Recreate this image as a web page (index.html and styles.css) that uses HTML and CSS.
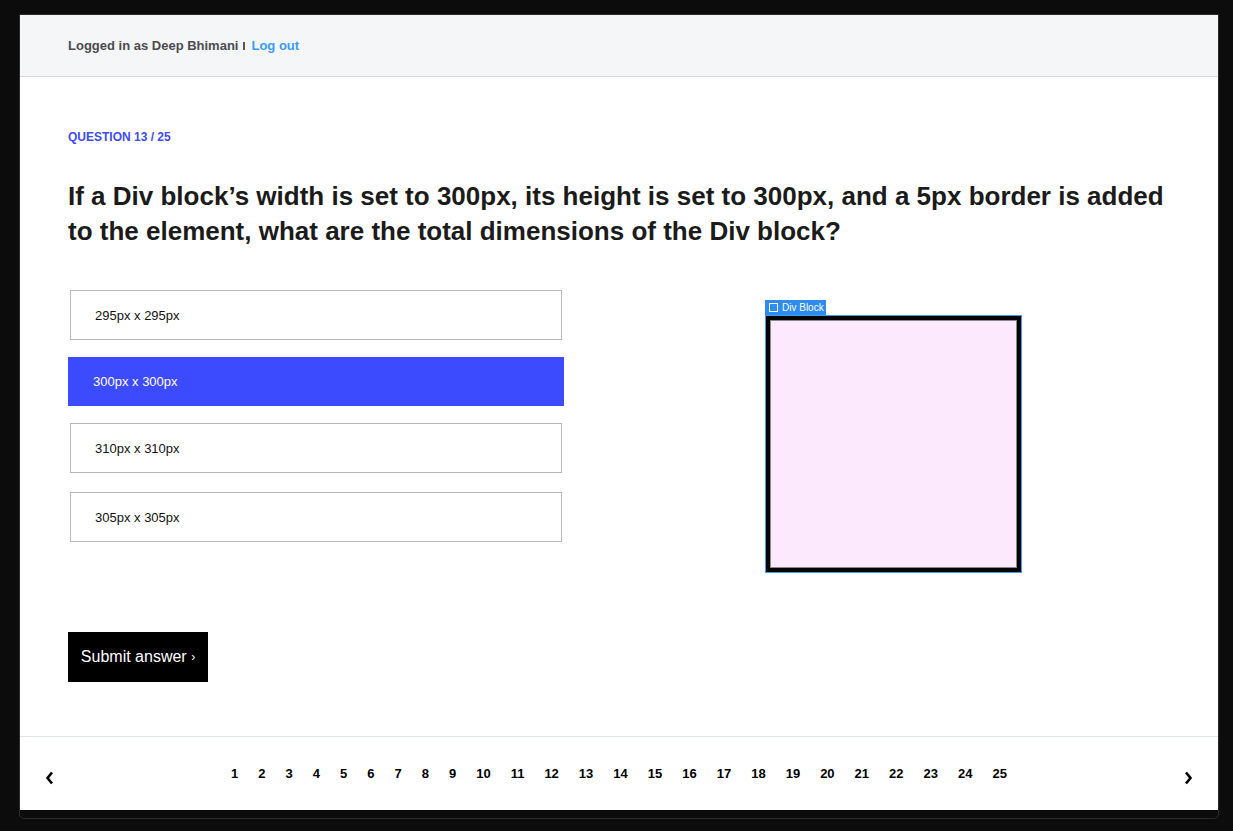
FILE: index.html
```html
<!DOCTYPE html>
<html lang="en">
<head>
<meta charset="utf-8">
<title>Quiz</title>
<link rel="stylesheet" href="styles.css">
</head>
<body>
<div class="frame">
  <div class="app">
    <header class="topbar">
      <span class="who">Logged in as Deep Bhimani</span>
      <span class="sep"></span>
      <a class="logout" href="#">Log out</a>
    </header>
    <main class="main">
      <div class="qlabel">QUESTION 13 / 25</div>
      <h1 class="qtitle">If a Div block’s width is set to 300px, its height is set to 300px, and a 5px border is added to the element, what are the total dimensions of the Div block?</h1>
      <div class="qgrid">
        <div class="options">
          <div class="option">295px x 295px</div>
          <div class="option selected">300px x 300px</div>
          <div class="option">310px x 310px</div>
          <div class="option">305px x 305px</div>
        </div>
        <div class="figure">
          <div class="divblock">
            <div class="tag"><span class="tagbox"></span>Div Block</div>
            <div class="blockouter"><div class="blockinner"></div></div>
          </div>
        </div>
      </div>
      <button class="submit">Submit answer <span class="chev">›</span></button>
    </main>
    <footer class="pager">
      <a class="arrow" href="#"><svg width="9" height="14" viewBox="0 0 9 14"><polyline points="7,1.5 2.5,7 7,12.5" fill="none" stroke="#000" stroke-width="2.6" stroke-linejoin="miter"/></svg></a>
      <nav class="pages">
        <a href="#">1</a><a href="#">2</a><a href="#">3</a><a href="#">4</a><a href="#">5</a><a href="#">6</a><a href="#">7</a><a href="#">8</a><a href="#">9</a><a href="#">10</a><a href="#">11</a><a href="#">12</a><a href="#">13</a><a href="#">14</a><a href="#">15</a><a href="#">16</a><a href="#">17</a><a href="#">18</a><a href="#">19</a><a href="#">20</a><a href="#">21</a><a href="#">22</a><a href="#">23</a><a href="#">24</a><a href="#">25</a>
      </nav>
      <a class="arrow" href="#"><svg width="9" height="14" viewBox="0 0 9 14"><polyline points="2,1.5 6.5,7 2,12.5" fill="none" stroke="#000" stroke-width="2.6" stroke-linejoin="miter"/></svg></a>
    </footer>
  </div>
</div>
</body>
</html>
```
FILE: styles.css
```css
html, body {
  margin: 0;
  padding: 0;
  background: #0c0c0c;
}
body {
  font-family: "Liberation Sans", Arial, sans-serif;
  padding-top: 14px;
  height: 831px;
  box-sizing: border-box;
}
.frame {
  margin-left: 19px;
  width: 1200px;
  height: 805px;
  border: 1px solid #2b2b2b;
  border-radius: 0 0 5px 5px;
  box-sizing: border-box;
}
.app {
  background: #fff;
  height: 795px;
  display: flex;
  flex-direction: column;
}
.topbar {
  height: 61px;
  flex: none;
  background: #f5f6f8;
  border-bottom: 1px solid #d9d9d9;
  display: flex;
  align-items: center;
  padding-left: 48px;
  font-size: 13px;
  font-weight: bold;
}
.who { color: #4b4b4f; }
.sep {
  display: inline-block;
  width: 2px;
  height: 8px;
  background: #55555a;
  margin: 1px 6px 0 5px;
}
.logout {
  color: #3a9cf5;
  text-decoration: none;
}
.main {
  flex: 1;
  padding: 52px 48px 0 48px;
}
.qlabel {
  color: #3d4bff;
  font-size: 12px;
  font-weight: bold;
  line-height: 16px;
}
.qtitle {
  margin: 34px -10px 0 0;
  font-size: 26px;
  line-height: 35px;
  font-weight: bold;
  color: #1b1b1b;
}
.qgrid {
  margin-top: 41px;
  display: grid;
  grid-template-columns: 1fr 1fr;
  align-items: start;
}
.options {
  display: flex;
  flex-direction: column;
  gap: 17px;
}
.option {
  width: 492px;
  height: 50px;
  margin-left: 2px;
  box-sizing: border-box;
  border: 1px solid #b8b8b8;
  display: flex;
  align-items: center;
  padding-left: 24px;
  font-size: 13px;
  color: #111;
}
.option:last-child {
  margin-top: 2px;
}
.option.selected {
  width: 496px;
  height: 49px;
  margin-left: 0;
  border: none;
  background: #3d4bff;
  color: #fff;
  padding-left: 25px;
}
.figure {
  display: flex;
  justify-content: center;
  padding: 10px 2px 0 0;
}
.divblock {
  width: 257px;
  display: flex;
  flex-direction: column;
}
.tag {
  display: flex;
  align-items: center;
  height: 15px;
  width: 61px;
  box-sizing: border-box;
  padding-left: 4px;
  background: #2e8cf0;
  color: #fff;
  font-size: 10px;
  line-height: 15px;
}
.tagbox {
  display: inline-block;
  width: 7px;
  height: 7px;
  border: 1px solid #fff;
  margin-right: 4px;
}
.blockouter {
  height: 258px;
  box-sizing: border-box;
  border: 1px solid #3d9cf0;
}
.blockinner {
  height: 100%;
  box-sizing: border-box;
  border: 4px solid #050505;
  background: #fde9fd;
  box-shadow: inset 0 0 0 1px #8a8a8a;
}
.submit {
  display: block;
  margin-top: 59px;
  width: 140px;
  height: 50px;
  background: #000;
  color: #fff;
  border: none;
  font-family: "Liberation Sans", Arial, sans-serif;
  font-size: 16px;
  padding: 0;
  text-align: center;
}
.chev {
  font-size: 12px;
  vertical-align: 1px;
}
.pager {
  flex: none;
  height: 73px;
  border-top: 1px solid #dde5ea;
  display: flex;
  align-items: center;
  justify-content: space-between;
  padding: 0 25px;
}
.arrow {
  display: flex;
  padding-top: 8px;
}
.pages {
  display: flex;
}
.pages a {
  color: #000;
  text-decoration: none;
  font-weight: bold;
  font-size: 13px;
  margin: 0 10px;
}
```
